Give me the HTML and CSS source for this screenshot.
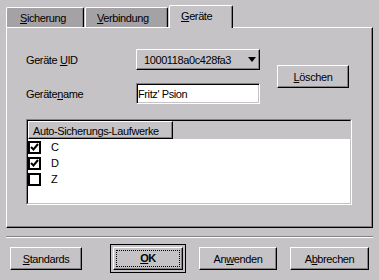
FILE: index.html
```html
<!DOCTYPE html>
<html>
<head>
    <meta charset="utf-8">
    <link rel="stylesheet" href="styles.css">
</head>
<body>
    <div class="dialog">
        <div class="tabs">
            <div class="tab tab-backup"><u>S</u>icherung</div>
            <div class="tab tab-connection"><u>V</u>erbindung</div>
            <div class="tab tab-devices active"><u>G</u>eräte</div>
        </div>

        <div class="panel">
            <div class="form">
                <label class="label label-uid">Geräte <u>U</u>ID</label>
                <div class="combo">
                    <span>1000118a0c428fa3</span>
                    <span class="arrow"></span>
                </div>
                <button class="button delete"><u>L</u>öschen</button>
                <label class="label label-name">Geräte<u>n</u>ame</label>
                <div class="field">Fritz' Psion</div>
            </div>

            <div class="listview">
                <div class="lv-inner">
                    <div class="lv-header">
                        <div class="lv-col">Auto-Sicherungs-Laufwerke</div>
                    </div>
                    <div class="lv-row">
                        <span class="check">
                            <svg width="9" height="9" viewBox="0 0 9 9"><polyline points="1,4 3.5,6.5 8,1" fill="none" stroke="#000" stroke-width="2"/></svg>
                        </span>
                        C
                    </div>
                    <div class="lv-row">
                        <span class="check">
                            <svg width="9" height="9" viewBox="0 0 9 9"><polyline points="1,4 3.5,6.5 8,1" fill="none" stroke="#000" stroke-width="2"/></svg>
                        </span>
                        D
                    </div>
                    <div class="lv-row">
                        <span class="check"></span>
                        Z
                    </div>
                </div>
            </div>
        </div>

        <div class="separator"></div>

        <div class="buttons">
            <button class="button standards"><u>S</u>tandards</button>
            <div class="default-frame">
                <button class="button ok"><span class="focus"><u>O</u>K</span></button>
            </div>
            <button class="button apply">An<u>w</u>enden</button>
            <button class="button cancel">A<u>b</u>brechen</button>
        </div>
    </div>
</body>
</html>
```

FILE: styles.css
```css
body {
    margin: 0;
    width: 379px;
    height: 280px;
    overflow: hidden;
    background: #c6c3c6;
    color: #000;
    font-family: 'Liberation Sans', Arial, sans-serif;
    font-size: 11px;
    letter-spacing: -0.4px;
}
u {
    text-decoration: underline;
    text-underline-offset: 1px;
}
.dialog {
    padding: 5px 6px 0;
}

/* tabs */
.tabs {
    display: flex;
    align-items: flex-end;
    height: 23px;
    margin-bottom: -1px;
    position: relative;
    z-index: 1;
}
.tab {
    box-sizing: border-box;
    height: 20px;
    margin-bottom: 1px;
    padding-left: 13px;
    line-height: 21px;
    background: #a5a2a5;
    border-top: 1px solid #fff;
    border-left: 1px solid #fff;
    border-right: 1px solid #000;
    border-top-left-radius: 2px;
    border-top-right-radius: 2px;
    box-shadow: inset -1px 0 #838183;
}
.tab-backup {
    width: 78px;
}
.tab-connection {
    width: 83px;
    margin-left: 1px;
    padding-left: 11px;
}
.tab-devices {
    width: 64px;
    margin-left: 1px;
    padding-left: 11px;
}
.tab.active {
    height: 23px;
    margin-bottom: 0;
    line-height: 20px;
    background: #c6c3c6;
}

/* page panel */
.panel {
    box-sizing: border-box;
    height: 201px;
    padding: 21px 0 0 19px;
    border-top: 1px solid #fff;
    border-left: 1px solid #fff;
    border-right: 1px solid #000;
    border-bottom: 1px solid #000;
    box-shadow: inset -1px -1px #838183;
}
.form {
    display: grid;
    grid-template-columns: 110px 124px 17px 72px;
    grid-template-rows: 21px 21px;
    row-gap: 13px;
}
.label {
    align-self: center;
    padding-top: 1px;
}
.label-uid {
    grid-column: 1;
    grid-row: 1;
}
.label-name {
    grid-column: 1;
    grid-row: 2;
}
.combo {
    grid-column: 2;
    grid-row: 1;
    box-sizing: border-box;
    display: flex;
    align-items: center;
    padding: 0 3px 0 7px;
    border-top: 1px solid #fff;
    border-left: 1px solid #fff;
    border-right: 1px solid #000;
    border-bottom: 1px solid #000;
    box-shadow: inset -1px -1px #838183;
}
.arrow {
    margin-left: auto;
    width: 0;
    height: 0;
    border-left: 4px solid transparent;
    border-right: 4px solid transparent;
    border-top: 5px solid #000;
}
.field {
    grid-column: 2;
    grid-row: 2;
    box-sizing: border-box;
    padding: 1px 0 0 1px;
    line-height: 18px;
    background: #fff;
    border-top: 1px solid #838183;
    border-left: 1px solid #838183;
    border-right: 1px solid #fff;
    border-bottom: 1px solid #fff;
    box-shadow: inset 1px 1px #000, inset -1px -1px #c6c3c6;
}
.delete {
    grid-column: 4;
    grid-row: 1 / span 2;
    align-self: center;
    width: 72px;
}

/* list view */
.listview {
    box-sizing: border-box;
    width: 326px;
    height: 86px;
    margin-top: 15px;
    border-top: 1px solid #838183;
    border-left: 1px solid #838183;
    border-right: 1px solid #fff;
    border-bottom: 1px solid #fff;
}
.lv-inner {
    box-sizing: border-box;
    height: 100%;
    background: #fff;
    border-top: 1px solid #000;
    border-left: 1px solid #000;
    border-right: 1px solid #c6c3c6;
    border-bottom: 1px solid #c6c3c6;
}
.lv-header {
    height: 18px;
    background: #c6c3c6;
}
.lv-col {
    box-sizing: border-box;
    width: 145px;
    height: 18px;
    padding: 1px 0 0 4px;
    line-height: 17px;
    border-top: 1px solid #fff;
    border-left: 1px solid #fff;
    border-right: 1px solid #000;
    border-bottom: 1px solid #000;
    box-shadow: inset -1px -1px #838183;
}
.lv-row {
    display: flex;
    align-items: center;
    height: 16px;
}
.check {
    box-sizing: border-box;
    display: flex;
    align-items: center;
    justify-content: center;
    width: 13px;
    height: 13px;
    margin-right: 10px;
    background: #fff;
    border: 2px solid #000;
}

/* dialog buttons */
.separator {
    margin-top: 8px;
    border-top: 1px solid #838183;
    border-bottom: 1px solid #fff;
}
.buttons {
    display: flex;
    align-items: center;
    height: 29px;
    margin-top: 6px;
    padding: 0 4px;
}
.button {
    box-sizing: border-box;
    height: 23px;
    padding: 0;
    font: inherit;
    letter-spacing: inherit;
    color: #000;
    background: #c6c3c6;
    border-top: 1px solid #fff;
    border-left: 1px solid #fff;
    border-right: 1px solid #000;
    border-bottom: 1px solid #000;
    box-shadow: inset -1px -1px #838183;
}
.standards {
    width: 72px;
}
.default-frame {
    box-sizing: border-box;
    width: 76px;
    height: 29px;
    margin-left: 28px;
    padding: 2px;
    border: 1px solid #000;
}
.ok {
    display: flex;
    align-items: center;
    justify-content: center;
    width: 100%;
    font-weight: bold;
}
.focus {
    box-sizing: border-box;
    width: 64px;
    height: 17px;
    line-height: 15px;
    border: 1px dotted #000;
}
.apply {
    width: 78px;
    margin-left: 13px;
}
.cancel {
    width: 79px;
    margin-left: 13px;
}
```
